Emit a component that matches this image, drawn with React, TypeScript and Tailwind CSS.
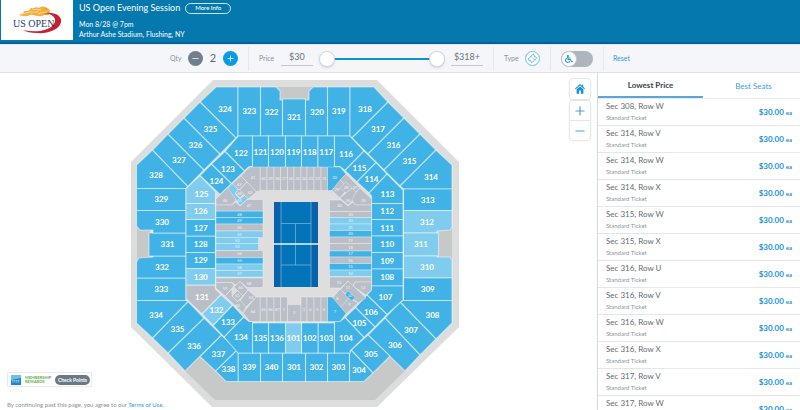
import { useState } from "react";
import { Minus, Plus, Ticket } from "lucide-react";
import { FaWheelchair } from "react-icons/fa";

type Tone = "blue" | "light" | "gray";

type Section = {
  id: string;
  points: string;
  x: number;
  y: number;
  tone?: Tone;
};

const tones = {
  blue: "fill-[#41b2e6]",
  light: "fill-[#7fccef]",
  gray: "fill-[#b9bec7]",
};

// rectangular section
const box = (id: string, x1: number, y1: number, x2: number, y2: number, tone: Tone = "blue"): Section => ({
  id,
  points: `${x1},${y1} ${x2},${y1} ${x2},${y2} ${x1},${y2}`,
  x: (x1 + x2) / 2,
  y: (y1 + y2) / 2,
  tone,
});

const upper: Section[] = [
  { id: "324", points: "216,87 238,87 238,136 236,138 200,102", x: 225, y: 109 },
  box("323", 238, 87, 260.5, 136),
  { id: "322", points: "260.5,87 276,87 280,91 280,100 282.5,100 282.5,136 260.5,136", x: 271.5, y: 112 },
  box("321", 282.5, 99, 305.5, 136),
  { id: "320", points: "313,87 327.5,87 327.5,136 305.5,136 305.5,100 309,100 309,91", x: 317, y: 112 },
  box("319", 327.5, 87, 350, 136),
  { id: "318", points: "350,87 374,87 388,102 352,138 350,136", x: 365, y: 109 },
  { id: "317", points: "388,102 404,118 368,154 352,138", x: 378, y: 129 },
  { id: "316", points: "404,118 420,134 384,170 368,154", x: 393.5, y: 145 },
  { id: "315", points: "420,134 436,150 400,186 384,170", x: 409.5, y: 161 },
  { id: "314", points: "436,150 452,165 452,189 403.5,189 400,186", x: 431, y: 177.5 },
  box("313", 403.5, 189, 452, 210.5),
  { id: "312", points: "403.5,210.5 452,210.5 452,227 450,230 437,231 437,233 403.5,233", x: 427, y: 222, tone: "light" },
  box("311", 403.5, 233, 438.5, 256, "light"),
  { id: "310", points: "403.5,256 437,256 437,257 450,257 452,260 452,278 403.5,278", x: 427, y: 267.5, tone: "light" },
  box("309", 403.5, 278, 452, 300.5),
  { id: "308", points: "403.5,300.5 452,300.5 452,323 436,339 400,302", x: 432.5, y: 315 },
  { id: "307", points: "400,302 436,339 420,355 385,318", x: 411, y: 330.5 },
  { id: "306", points: "385,318 420,355 405,371 368,335", x: 395, y: 345.5 },
  { id: "305", points: "368,335 390,356 373,373 351,350", x: 371, y: 354.5 },
  { id: "304", points: "351,350 373,373 364,381.5 349.5,381.5 349.5,353", x: 359, y: 370.5 },
  box("303", 327.5, 353, 349.5, 381.5),
  box("302", 305.5, 353, 327.5, 381.5),
  box("301", 282.5, 353, 305.5, 381.5),
  box("340", 260.5, 353, 282.5, 381.5),
  box("339", 238, 353, 260.5, 381.5),
  { id: "338", points: "237,350 238,353 238,381.5 226,381.5 215.5,371", x: 228.5, y: 369.5 },
  { id: "337", points: "221.5,335 237,350 215.5,371 200,356.5", x: 218.5, y: 354.5 },
  { id: "336", points: "204,318 221.5,335 185,371 168,353", x: 194, y: 346 },
  { id: "335", points: "188,301.5 204,318 168,353 152.5,338", x: 177.5, y: 329.5 },
  { id: "334", points: "136.5,300.5 186,300.5 188,301.5 152.5,338 136.5,323", x: 156, y: 315 },
  box("333", 136.5, 278, 186, 300.5),
  { id: "332", points: "153,256 186,256 186,278 136.5,278 136.5,262 139,258 153,257", x: 162, y: 267.5 },
  box("331", 149, 233, 186, 256),
  { id: "330", points: "136.5,210.5 186,210.5 186,233 153,233 153,230 140,230 136.5,226", x: 162, y: 222 },
  box("329", 136.5, 188.5, 186, 210.5),
  { id: "328", points: "152.5,150 188,186.5 186,188.5 136.5,188.5 136.5,165", x: 156, y: 175.5 },
  { id: "327", points: "168,134 204,170 188,186.5 152.5,150", x: 179, y: 160.5 },
  { id: "326", points: "184,118 220,154 204,170 168,134", x: 195.5, y: 145.5 },
  { id: "325", points: "200,102 236,138 220,154 184,118", x: 210.5, y: 129 },
];

const lower: Section[] = [
  { id: "122", points: "238.5,136 252.5,136 252.5,166.5 249,166.5 244.5,171 225,151.5", x: 241, y: 153.5 },
  box("121", 252.5, 136, 268.5, 169),
  box("120", 268.5, 136, 285.5, 169),
  box("119", 285.5, 136, 301.5, 169),
  box("118", 301.5, 136, 318, 169),
  box("117", 318, 136, 334.5, 169),
  { id: "116", points: "334.5,136 350,136 364,151 345,170.5 340,166.5 334.5,166.5", x: 346, y: 154 },
  { id: "115", points: "364,151 376,162.5 357,182 345,170.5", x: 359.5, y: 168.5 },
  { id: "114", points: "376,162.5 387,174 369,193 357,182", x: 371.5, y: 179.5 },
  { id: "113", points: "387,174 403,190 403,203.5 371.5,203.5 371.5,196 369,193", x: 387.5, y: 194 },
  box("112", 371.5, 203.5, 403, 219.5),
  box("111", 371.5, 219.5, 403, 236),
  box("110", 371.5, 236, 403, 252.5),
  box("109", 371.5, 252.5, 403, 269),
  box("108", 371.5, 269, 403, 286),
  { id: "107", points: "371.5,286 403,286 403,300 387,314.5 367,295 371.5,290", x: 385.5, y: 297.5 },
  { id: "106", points: "367,295 387,314.5 375,327 355.5,307.5", x: 371, y: 312 },
  { id: "105", points: "355.5,307.5 375,327 364,337.5 345,317.5", x: 359.5, y: 323 },
  { id: "104", points: "345,317.5 364,337.5 350,351 350,353 334.5,353 334.5,321.5 340,321.5", x: 346, y: 338 },
  box("103", 318, 323, 334.5, 353),
  box("102", 301.5, 323, 318, 353),
  box("101", 285.5, 323, 301.5, 353, "light"),
  box("136", 268.5, 323, 285.5, 353),
  box("135", 252.5, 323, 268.5, 353),
  { id: "134", points: "252.5,321.5 252.5,353 238,353 224,337 243.5,317 249,321.5", x: 241, y: 337 },
  { id: "133", points: "224,337 213,325.5 232.5,305 243.5,317", x: 228, y: 322 },
  { id: "132", points: "213,325.5 202,314 221,294.5 232.5,305", x: 216.5, y: 310.5, tone: "light" },
  { id: "131", points: "186,285 215.5,285 215.5,289 221,294.5 202,314 186,299", x: 202, y: 297.5, tone: "gray" },
  box("130", 186, 268.5, 215.5, 285, "light"),
  box("129", 186, 252.5, 215.5, 268.5),
  box("128", 186, 236, 215.5, 252.5),
  box("127", 186, 219.5, 215.5, 236),
  box("126", 186, 203.5, 215.5, 219.5, "light"),
  { id: "125", points: "200,175.5 215.5,191.5 215.5,203.5 186,203.5 186,188.5", x: 201.5, y: 194.5, tone: "light" },
  { id: "124", points: "211.5,164 231.5,183.5 220,194.5 200,175.5", x: 216.5, y: 181.5 },
  { id: "123", points: "225,151.5 244.5,171 231.5,183.5 211.5,164", x: 228, y: 169 },
];

const stripX = [260, 267, 274, 280.5, 287.5, 294, 301, 307, 314, 321, 327.5];

const courtside: Section[] = [
  // behind the baseline, top
  ...["40", "39", "38", "37", "36", "35", "34", "33", "32", "31"].map((id, i) =>
    box(id, stripX[i], 167, stripX[i + 1], 190.5, "gray")
  ),
  // bottom
  ...["65", "66", "67", "1"].map((id, i) => box(id, stripX[i], 297, stripX[i + 1], 321.5, "gray")),
  box("2", 287.5, 304.5, 301, 321.5, "gray"),
  ...["3", "4", "5", "6"].map((id, i) => box(id, stripX[i + 6], 297, stripX[i + 7], 321.5, "gray")),
  // left side
  box("48", 216, 211, 263, 217.5),
  box("49", 216, 217.5, 263, 224),
  box("50", 216, 224, 263, 231, "gray"),
  box("51", 216, 231, 263, 237.5, "light"),
  box("52", 216, 237.5, 258.5, 243.5, "light"),
  box("53", 216, 243.5, 258.5, 250.5, "light"),
  box("54", 216, 250.5, 263, 257.5, "gray"),
  box("55", 216, 257.5, 263, 264),
  box("56", 216, 264, 263, 270.5, "light"),
  box("57", 216, 270.5, 263, 277, "light"),
  // right side
  box("23", 329.5, 211.5, 371.5, 217.5, "gray"),
  box("22", 329.5, 217.5, 371.5, 224, "light"),
  box("21", 329.5, 224, 371.5, 230.5, "light"),
  box("20", 329.5, 230.5, 371.5, 237),
  box("19", 329.5, 237, 371.5, 243.5, "gray"),
  box("18", 329.5, 243.5, 371.5, 251, "gray"),
  box("17", 329.5, 251, 371.5, 257),
  box("16", 329.5, 257, 371.5, 263.5, "gray"),
  box("15", 329.5, 263.5, 371.5, 270),
  box("14", 329.5, 270, 371.5, 276.5, "light"),
  // top left corner
  { id: "41", points: "249.5,167 260,167 260,190.5 256.5,192 241,176", x: 253, y: 178, tone: "gray" },
  { id: "43", points: "241,176 247,182 239,190 232,184", x: 239, y: 185, tone: "gray" },
  { id: "42", points: "247,182 256.5,192 248,199 239.5,190", x: 250, y: 192.5, tone: "gray" },
  { id: "46", points: "216,199 229,186 236,200 232,205 216,205", x: 225, y: 201, tone: "gray" },
  { id: "47", points: "216,205 232,205 236,202 240,206 247,199.5 263,199.5 263,211 216,211", x: 249, y: 206, tone: "gray" },
  { id: "45", points: "232,183.5 228,188 240,205.5 248,198.5 244.5,195.5 240,199 235,194 238,189", x: 239.5, y: 201, tone: "light" },
  { id: "44", points: "239,189 244,194 240,198 235,193", x: 239.5, y: 193.5, tone: "gray" },
  // top right corner
  { id: "30", points: "327.5,167 340,167 346,174 332,190.5 327.5,190.5", x: 334.5, y: 177.5 },
  { id: "29", points: "340,180 348,188 340,198 332,190.5", x: 337, y: 190, tone: "gray" },
  { id: "27", points: "346,174 360,188 354,194 340,180", x: 355, y: 188, tone: "gray" },
  { id: "28", points: "346,182 352,188 346,193 340,188", x: 346, y: 188, tone: "gray" },
  { id: "26", points: "346,193 352,188 356,192 355,198 348,205 340,198", x: 348, y: 201, tone: "gray" },
  { id: "25", points: "360,188 371.5,199 371.5,205 355,205 352,200 356,192", x: 363.5, y: 200.5, tone: "gray" },
  { id: "24", points: "329.5,200 341,200 348,206 353,202 355,205 371.5,205 371.5,211.5 329.5,211.5", x: 339.5, y: 206, tone: "gray" },
  // bottom left corner
  { id: "58", points: "216,278 263,278 263,287.5 247,287.5 240,281.5 236,285 232,282.5 216,282.5", x: 249, y: 283.5, tone: "gray" },
  { id: "59", points: "216,282.5 232,282.5 234,286 225,296 216,288", x: 225, y: 288.5, tone: "gray" },
  { id: "60", points: "240,281.5 248,290 243,296 237.5,290.5 234,287", x: 240.5, y: 288, tone: "gray" },
  { id: "63", points: "248,290 256,297 246,307 240,301", x: 251, y: 297.5, tone: "gray" },
  { id: "62", points: "232,296 237.5,301.5 240,300 246,307 243,313 225,296 232,289", x: 237.5, y: 305.5, tone: "gray" },
  { id: "61", points: "237.5,290.5 243,296 237.5,301.5 232,296", x: 237.5, y: 296, tone: "gray" },
  { id: "64", points: "256,297 260,297 260,321.5 250,321.5 243,313", x: 253, y: 312, tone: "gray" },
  // bottom right corner
  { id: "13", points: "329.5,277 371.5,277 371.5,282 355,282 353,286 348,281 341,288 329.5,288", x: 339, y: 282.5, tone: "gray" },
  { id: "12", points: "355,282 371.5,282 371.5,290 366,295 353,286", x: 363, y: 288, tone: "gray" },
  { id: "11", points: "348,281 366,298 358,303 340,290", x: 348, y: 287.5, tone: "gray" },
  { id: "8", points: "340,289 349,298 343,310 332,299", x: 337.5, y: 298.5, tone: "gray" },
  { id: "9", points: "349,298 358,303 346,314 340,308", x: 349.5, y: 305, tone: "gray" },
  { id: "10", points: "348,291 355,297 352,301 345,295", x: 350, y: 296 },
  { id: "7", points: "327.5,297 332,297 346,313.5 340,321.5 327.5,321.5", x: 335, y: 312 },
];

const listings = [
  "Sec 308, Row W",
  "Sec 314, Row V",
  "Sec 314, Row W",
  "Sec 314, Row X",
  "Sec 315, Row W",
  "Sec 315, Row X",
  "Sec 316, Row U",
  "Sec 316, Row V",
  "Sec 316, Row W",
  "Sec 316, Row X",
  "Sec 317, Row V",
  "Sec 317, Row W",
];

function Sections({ items, small = false }: { items: Section[]; small?: boolean }) {
  return (
    <g>
      {items.map((s) => (
        <polygon
          key={s.id}
          points={s.points}
          className={tones[s.tone ?? "blue"]}
          stroke="#ffffff"
          strokeOpacity={small ? 0.4 : 0.5}
          strokeWidth={small ? 0.8 : 1.1}
        />
      ))}
      {items.map((s) => (
        <text
          key={s.id}
          x={s.x}
          y={s.y}
          dy="0.36em"
          textAnchor="middle"
          className={small ? "fill-white/80 text-[4px]" : "fill-white text-[8px] font-bold"}
        >
          {s.id}
        </text>
      ))}
    </g>
  );
}

function StadiumMap() {
  return (
    <svg viewBox="0 73 597 337" className="block h-full w-full" role="img" aria-label="Seating map">
      <polygon points="213,80 377,80 459,162 459,327 377,407 212,407 131,327 131,162" fill="#dcdddd" />
      <g fill="#c7c8c8">
        <polygon points="185,371 200,356.5 226,381.5 364,381.5 390,356 405,371 375,400 215,400" />
        <rect x="276" y="87" width="37" height="13" />
        <rect x="137" y="226" width="13" height="36" />
        <rect x="438" y="226" width="14" height="36" />
      </g>
      <Sections items={upper} />
      <Sections items={lower} />
      <polygon
        points="249.5,167 340,167 371,199 371,290 340,321.5 249.5,321.5 216,288 216,199"
        fill="#dededf"
      />
      <Sections items={courtside} small />

      {/* court */}
      <rect x="274" y="202" width="44" height="85" fill="#0862a9" />
      <rect x="281" y="202" width="30" height="85" fill="#0474b8" />
      <g stroke="#6fb1dc" strokeWidth="0.8" fill="none">
        <path d="M281 202v85M311 202v85M281 223.5h30M281 265h30M295.5 223.5v41.5" />
      </g>
      <path d="M273 244h46" stroke="#e8f2f9" strokeWidth="1.6" />
    </svg>
  );
}

function Logo() {
  return (
    <svg viewBox="0 0 72 40" className="h-10 w-[72px] bg-white" role="img" aria-label="US Open">
      <path
        d="M18 15c2-1 3-2 5-2-1-1-1-2 1-2s3 0 5-1c-1-1 0-2 2-2s3 0 4-1c1 1 3 1 5 0 2-1 4 0 5 1 2 0 4 1 4 3-1 1 0 2-1 4-2 1-3-1-5 0-2 2-4 1-6 1-3 0-5-2-8-1-4 2-8 1-11 0z"
        fill="#f4ae3d"
      />
      <path d="M20 14c4 0 6-2 9-2 4 0 6 1 9-1M31 9c3 1 6 0 9 1M37 14c3-1 5-2 9-2" stroke="#fde3a8" strokeWidth="0.9" fill="none" />
      <path d="M44 7l2 1-1 2zM41 14l5-1 1 2z" fill="#d98a26" />
      <path d="M45 13c9-1 16 3 15 9-1 8-15 12-24 11-6 0-11-1-14-3 12 3 26 1 31-6 3-5 0-9-8-11z" fill="#c8202f" />
      <text x="12" y="27" className="fill-[#2a3a66] font-['Liberation_Serif',serif] text-[10px]">
        US OPEN
      </text>
    </svg>
  );
}

const thumb =
  "pointer-events-none absolute inset-0 m-0 h-4 w-full appearance-none bg-transparent [&::-webkit-slider-thumb]:pointer-events-auto [&::-webkit-slider-thumb]:h-4 [&::-webkit-slider-thumb]:w-4 [&::-webkit-slider-thumb]:appearance-none [&::-webkit-slider-thumb]:rounded-full [&::-webkit-slider-thumb]:border [&::-webkit-slider-thumb]:border-[#d3d7dc] [&::-webkit-slider-thumb]:bg-white [&::-webkit-slider-thumb]:shadow-sm";

function Toolbar() {
  const [qty, setQty] = useState(2);
  const [min, setMin] = useState(30);
  const [max, setMax] = useState(318);
  const [accessible, setAccessible] = useState(false);

  return (
    <div className="flex h-7 shrink-0 items-center justify-center border-b border-[#dfe1e4] bg-[#f5f6f9] text-[7px] text-[#8a929c]">
      <div className="flex h-6 items-center border-r border-[#e6e8ec] pr-[10px]">
        <span className="w-[18px]">Qty</span>
        <button
          aria-label="Fewer tickets"
          onClick={() => setQty(Math.max(1, qty - 1))}
          className="flex size-[15px] items-center justify-center rounded-full bg-[#6f7f8d] text-white"
        >
          <Minus size={9} />
        </button>
        <span className="w-5 text-center text-[11px] text-[#5c646d]">{qty}</span>
        <button
          aria-label="More tickets"
          onClick={() => setQty(qty + 1)}
          className="flex size-[15px] items-center justify-center rounded-full bg-[#0a9be3] text-white"
        >
          <Plus size={9} />
        </button>
      </div>

      <div className="flex h-6 items-center border-r border-[#e6e8ec] px-[10px]">
        <label htmlFor="min-price" className="w-[22px]">Price</label>
        <input
          id="min-price"
          readOnly
          value={`$${min}`}
          className="h-[14px] w-8 border-b border-[#c3c8ce] pb-1 text-center text-[9px] text-[#6b737c]"
        />
        <div className="relative mx-[6px] h-4 w-[126px]">
          <div className="mx-2 mt-[7px] h-[2px] bg-[#0a93d8]" />
          <input
            type="range"
            aria-label="Lowest price"
            min={30}
            max={318}
            value={min}
            onChange={(e) => setMin(Math.min(Number(e.target.value), max))}
            className={thumb}
          />
          <input
            type="range"
            aria-label="Highest price"
            min={30}
            max={318}
            value={max}
            onChange={(e) => setMax(Math.max(Number(e.target.value), min))}
            className={thumb}
          />
        </div>
        <input
          aria-label="Maximum price"
          readOnly
          value={`$${max}+`}
          className="h-[14px] w-8 border-b border-[#c3c8ce] pb-1 text-center text-[9px] text-[#6b737c]"
        />
      </div>

      <div className="flex h-6 items-center border-r border-[#e6e8ec] px-[10px]">
        <span className="w-[21px]">Type</span>
        <button
          aria-label="Ticket type"
          className="flex size-[15px] items-center justify-center rounded-full border border-[#6bbbea] bg-white text-[#3aa4e0]"
        >
          <Ticket size={9} className="-rotate-45" />
        </button>
      </div>

      <div className="flex h-6 items-center border-r border-[#e6e8ec] px-[10px]">
        <label className="flex h-4 w-8 cursor-pointer items-center rounded-full bg-[#adb5bd] has-checked:justify-end has-checked:bg-[#0a93d8]">
          <input
            type="checkbox"
            aria-label="Accessible seats only"
            checked={accessible}
            onChange={(e) => setAccessible(e.target.checked)}
            className="sr-only"
          />
          <span className="flex size-4 items-center justify-center rounded-full border border-[#c3c8ce] bg-white text-[#1c95dc]">
            <FaWheelchair size={8} />
          </span>
        </label>
      </div>

      <button className="pl-[9px] text-[#2f9bdb]">Reset</button>
    </div>
  );
}

const tabOn = "border-b-2 border-[#5aa5dc] font-bold text-[#3c434a]";
const tabOff = "text-[#3aa0de]";

export default function App() {
  const [tab, setTab] = useState("lowest");

  return (
    <div className="flex h-screen flex-col overflow-hidden bg-white font-['Lato',sans-serif]">
      <div className="shrink-0 border-b border-[#dfe9f1]">
        <header className="flex h-11 border-b-2 border-[#04609a] bg-[#0578ae] pl-px text-white">
          <Logo />
          <div className="pl-[6px]">
            <div className="flex h-4 items-center gap-[5px]">
              <h1 className="text-[9px] font-normal">US Open Evening Session</h1>
              <button className="h-[11px] w-[46px] rounded-full border border-white/80 text-[6px] leading-[8px] font-medium">
                More Info
              </button>
            </div>
            <p className="mt-[3px] text-[7px] leading-[10px]">Mon 8/28 @ 7pm</p>
            <p className="text-[7px] leading-[10px]">Arthur Ashe Stadium, Flushing, NY</p>
          </div>
        </header>
      </div>

      <Toolbar />

      <div className="flex min-h-0 flex-1">
        <main className="relative min-w-0 flex-1">
          <StadiumMap />

          <div className="absolute top-[6px] right-[7px] flex w-5 flex-col gap-[2px] text-[#4a9fdc]">
            <button
              aria-label="Reset map"
              className="flex h-5 items-center justify-center rounded-xs bg-white text-[#1492dc] shadow-[0_0_2px_rgba(0,0,0,0.35)]"
            >
              <svg viewBox="0 0 12 12" className="size-3" fill="currentColor">
                <path d="M6 1 1 5.4l.7.8L6 2.5l4.3 3.7.7-.8-1.8-1.6V1.7H8v1z" />
                <path d="M6 3.4 2.6 6.3v4.5h2.5V7.6h1.8v3.2h2.5V6.3z" />
              </svg>
            </button>
            <div className="flex flex-col rounded-xs bg-white shadow-[0_0_2px_rgba(0,0,0,0.35)]">
              <button aria-label="Zoom in" className="flex h-5 items-center justify-center border-b border-[#e4e6e9]">
                <Plus size={14} strokeWidth={2} />
              </button>
              <button aria-label="Zoom out" className="flex h-[19px] items-center justify-center">
                <Minus size={14} strokeWidth={2} />
              </button>
            </div>
          </div>

          <div className="absolute bottom-0 left-[7px]">
            <div className="flex h-[15px] w-[85px] items-center gap-1 border border-[#e9ebee] bg-white px-[3px]">
              <svg viewBox="0 0 10 10" className="size-[10px] shrink-0">
                <rect width="10" height="10" fill="#1b86cc" />
                <path d="M0 0h10v3L0 5z" fill="#6cc0ea" />
                <path d="M1 5.5h8M1 7h8" stroke="#d5ecf8" strokeWidth="0.7" strokeDasharray="1.4 0.5" />
              </svg>
              <span className="w-[26px] text-[4px] leading-[4px] font-bold text-[#5fae4b]">
                MEMBERSHIP REWARDS
              </span>
              <button className="h-[10px] w-[35px] shrink-0 rounded-full bg-[#6b7885] text-[5px] leading-[10px] font-bold text-white">
                Check Points
              </button>
            </div>
            <p className="mt-[13px] text-[6px] leading-[10px] text-[#8b9096]">
              By continuing past this page, you agree to our{" "}
              <a href="#terms" className="text-[#2f9bdb]">Terms of Use.</a>
            </p>
          </div>
        </main>

        <aside className="flex w-[203px] shrink-0 flex-col overflow-hidden border-l border-[#d5dae0]">
          <div className="flex h-[26px] shrink-0 border-b border-[#e8ebee] text-[8px]">
            <button
              onClick={() => setTab("lowest")}
              className={`w-[52%] ${tab === "lowest" ? tabOn : tabOff}`}
            >
              Lowest Price
            </button>
            <button
              onClick={() => setTab("best")}
              className={`flex-1 pl-1 ${tab === "best" ? tabOn : tabOff}`}
            >
              Best Seats
            </button>
          </div>
          <ul>
            {listings.map((name) => (
              <li key={name} className="flex h-[27px] items-center justify-between border-b border-[#e3e7ea] px-2">
                <div>
                  <p className="text-[8px] leading-[12px] text-[#646b72]">{name}</p>
                  <p className="text-[6px] leading-[12px] text-[#8e959c]">Standard Ticket</p>
                </div>
                <p className="text-[8px] font-bold text-[#1b93d9]">
                  $30.00 <span className="text-[6px]">ea</span>
                </p>
              </li>
            ))}
          </ul>
        </aside>
      </div>
    </div>
  );
}
